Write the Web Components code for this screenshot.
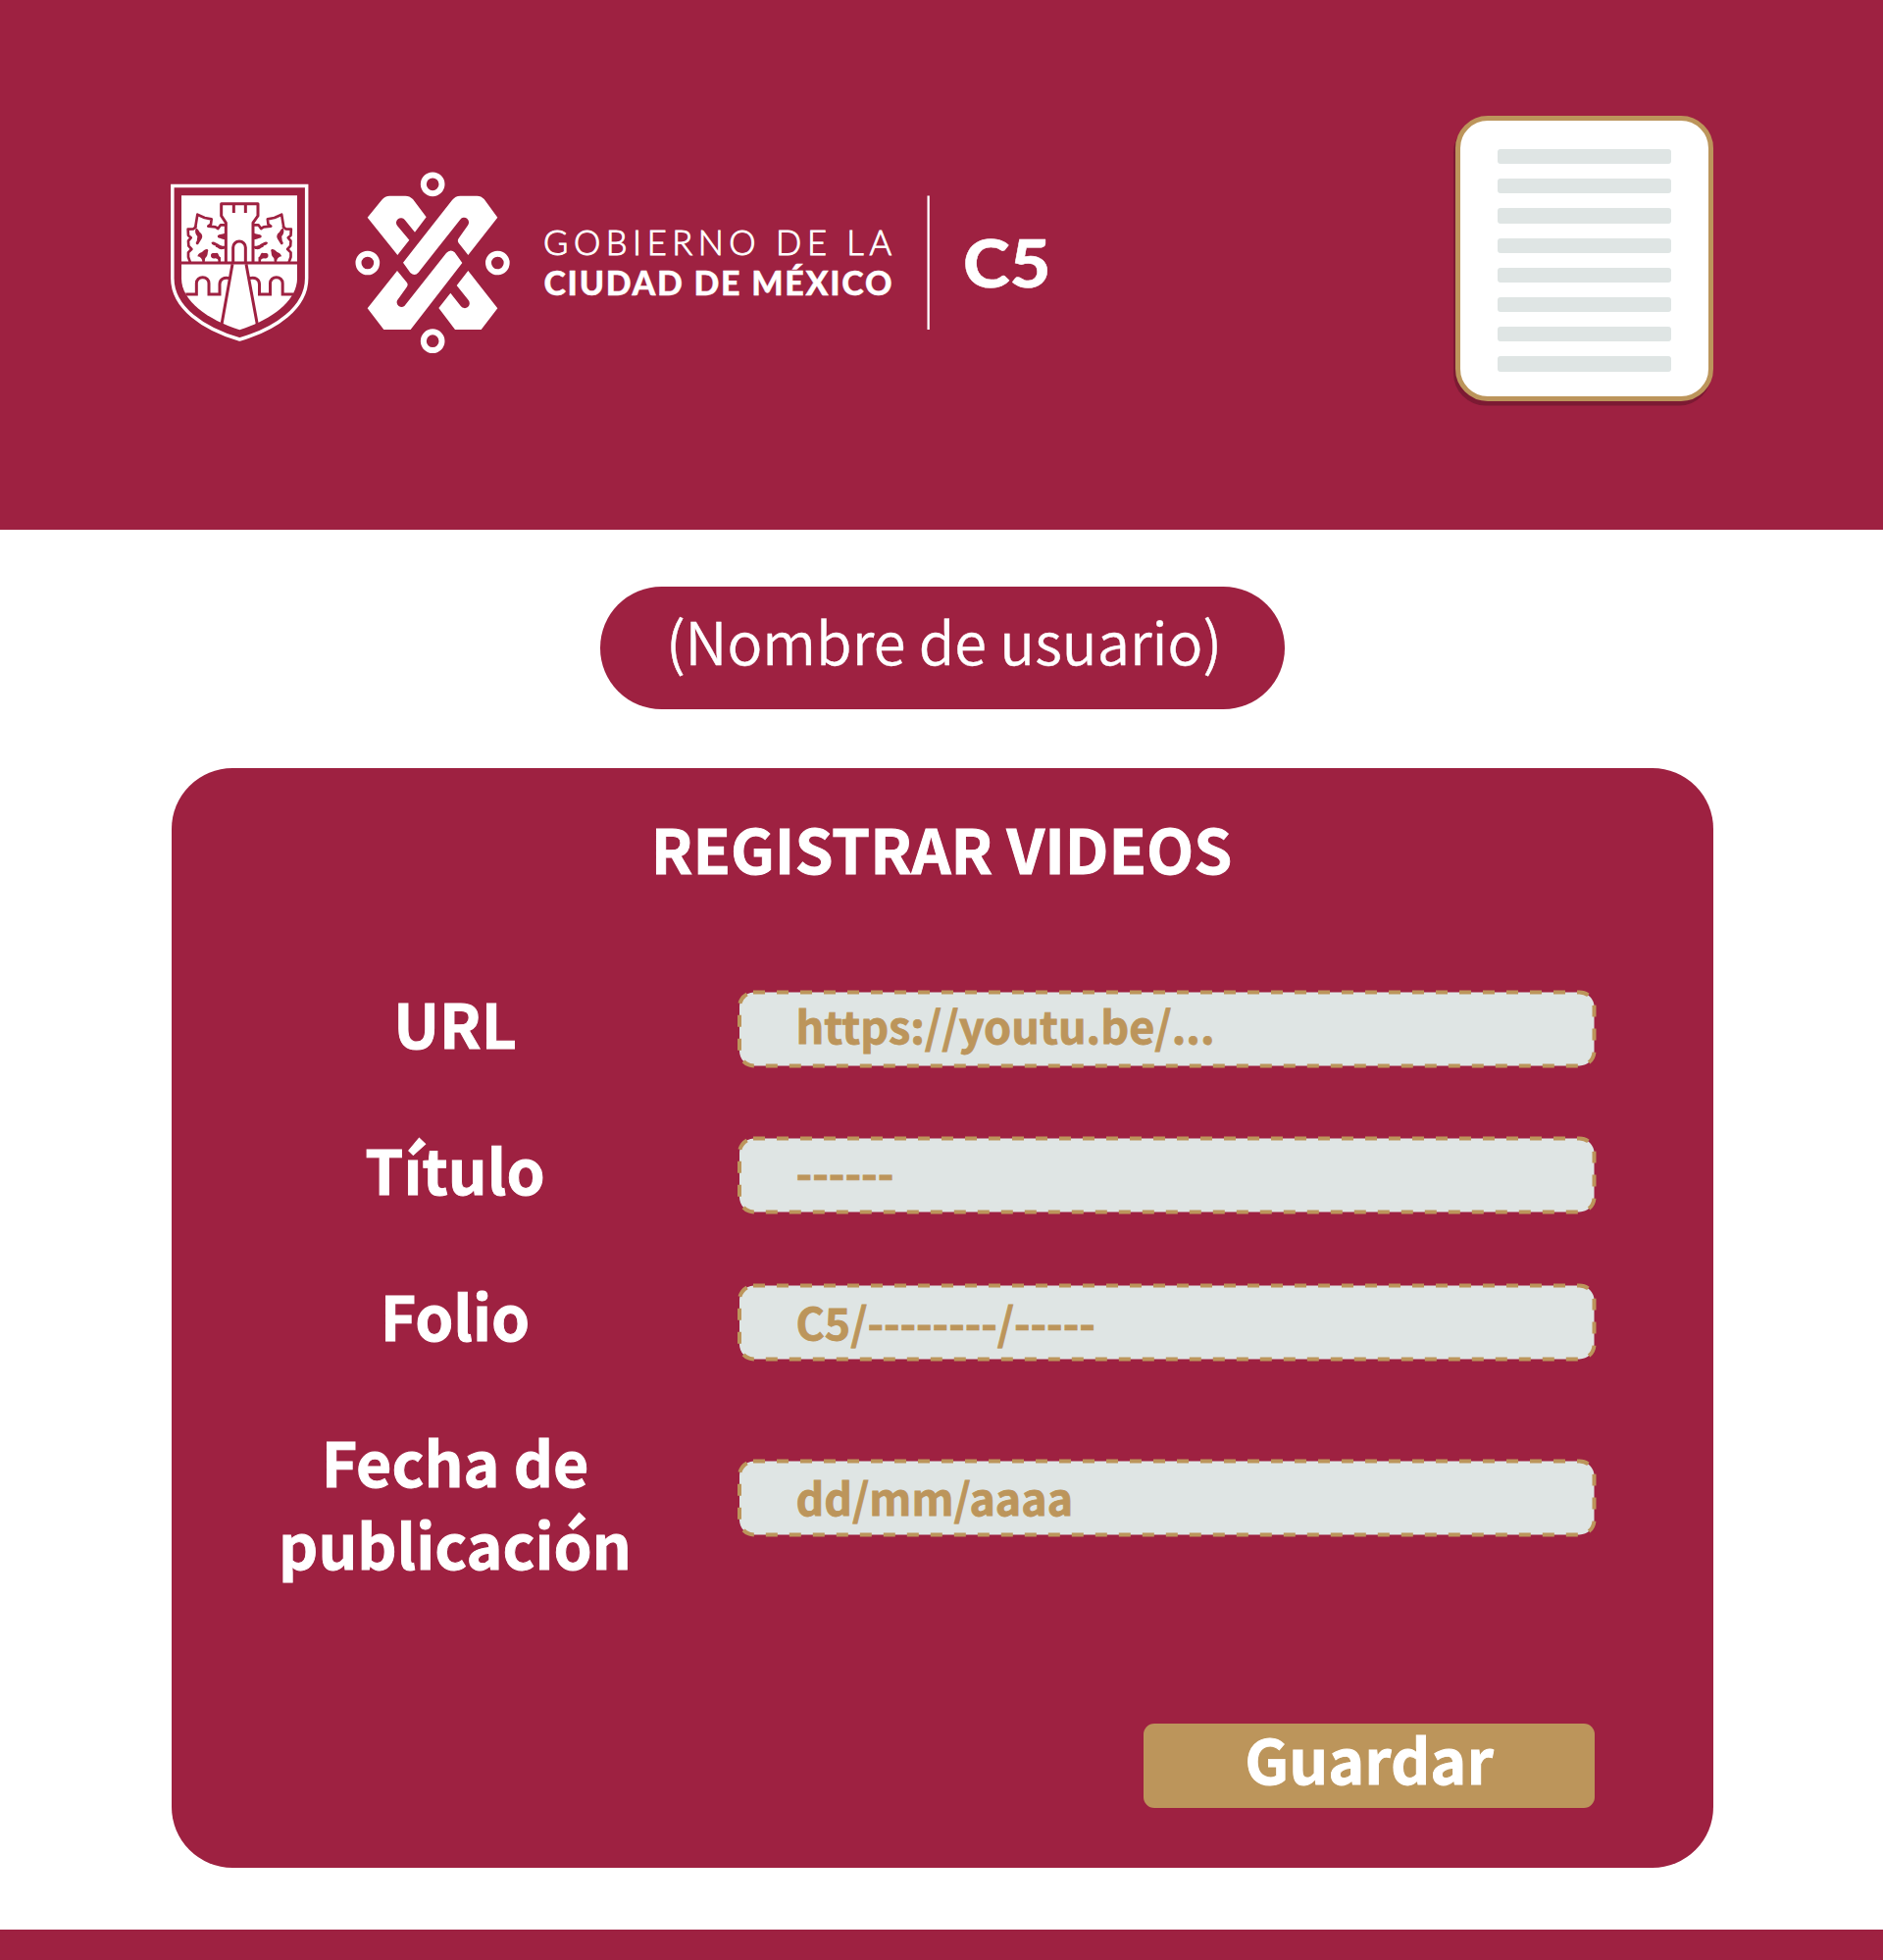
<!DOCTYPE html>
<html lang="es">
<head>
<meta charset="utf-8">
<title>Registrar videos</title>
<style>
:root{--guinda:#9e2141;--oro:#bc955b;--gris:#dfe5e4}
html,body{margin:0;background:#fff}
body{font-family:"Noto Sans CJK SC","Noto Sans",sans-serif;color:#fff;width:1920px;height:1998px;overflow:hidden}
</style>
</head>
<body>
<app-page></app-page>
<script>
const define = (name, html) => customElements.define(name, class extends HTMLElement {
  constructor() {
    super();
    this.attachShadow({ mode: 'open' }).innerHTML = html;
  }
});

define('city-shield', `
<style>:host{display:block;width:160px;height:180px}svg{display:block}</style>
<svg width="160" height="180" viewBox="0 -1 480 540" fill="none" stroke="#9e2141" stroke-width="9">
  <path stroke="#fff" stroke-width="10.500" d="M32.500 42.500H443V325C443 415 348 480 238 512C128 480 32.500 415 32.500 325Z"/>
  <path fill="#fff" stroke="none" d="M60 72H414V325C414 394 336 451 238 483C140 451 60 394 60 325Z"/>
  <path d="M60 278H414"/>
  <path stroke-linejoin="round" d="M196 278V155L182 134V97H294V134L279 155V278"/>
  <path d="M220 97V125M256 97V125M218 278V231A19 19 0 0 1 256 231V278M216 282L183 466M258 282L292 466"/>
  <g id="half">
    <path d="M73 374H106V340A19 18 0 0 1 144 340V374H177V343C177 328 190 320 208 325"/>
    <path stroke-linecap="round" stroke-linejoin="round" stroke-width="8" d="M103 167L109 130L131 140L152 144L150 160L142 166L164 168L172 173L180 162L195 162M104 168L97 174L80 175L81 194L89 201L81 211L82 226L91 236L81 246L81 260L86 274M191 194L176 197M188 232L168 226"/>
    <g fill="#9e2141" stroke="none">
      <path d="M104 173C107 170 112 178 116 184C123 189 126 196 122 204L111 222C104 222 102 217 107 211L109 197C103 191 100 181 104 173Z"/>
      <path d="M109 258C112 247 120 248 126 242C133 235 140 233 142 240C139 248 142 252 136 260C130 264 133 270 131 275H124C124 266 118 259 109 258Z"/>
      <path d="M150 253C154 244 162 250 168 247C175 249 173 258 180 261V276H172C173 269 172 265 163 264C155 266 149 262 150 253Z"/>
      <path d="M170 196C176 188 188 192 196 186V207C186 207 180 203 172 201Z"/>
      <path d="M152 215C158 210 167 218 174 221C181 229 190 224 196 228V233C187 233 187 239 176 235C169 233 172 225 161 225C153 222 151 218 152 215Z"/>
    </g>
  </g>
  <use href="#half" transform="translate(475.500 0) scale(-1 1)"/>
</svg>`);

define('city-emblem', `
<style>:host{display:block;width:180px;height:205px}svg{display:block}</style>
<svg width="180" height="205" viewBox="0 -1 540 615">
  <g fill="none" stroke="#fff" stroke-width="18">
    <circle cx="273.500" cy="67.500" r="28"/><circle cx="74.500" cy="308" r="28"/>
    <circle cx="472" cy="308" r="28"/><circle cx="273.500" cy="547" r="28"/>
  </g>
  <g fill="#fff">
    <path d="M74 169L118 115Q128 103 142 103H190Q203 103 213 113L254 168L219 214L188 176A14.500 14.500 0 0 0 165 194L202 238L166 284Z"/>
    <path d="M183 307L333 116Q343 103 358 103H409Q422 103 431 113L472 169L382 284L353 247Q348 240 353 233L381 193A14.500 14.500 0 0 0 358 175L230 337Q219 350 205 338Z"/>
    <path d="M165 332L194 367Q200 374 194 382L165 423A14.500 14.500 0 0 0 187 440L315 278Q328 264 341 276L364 308L206 512H124L74 447Z"/>
    <path d="M382 332L472 447L422 512H342L292 446L328 400L360 441A14.500 14.500 0 0 0 383 422L347 377Z"/>
  </g>
</svg>`);

define('brand-text', `
<style>:host{display:block;width:550px;height:160px}svg{display:block}text{fill:#fff;stroke:#fff;font-family:Lato,sans-serif}</style>
<svg width="550" height="160">
  <text x="14" y="69.700" font-size="34.500" font-weight="300" stroke-width=".9" textLength="355" lengthAdjust="spacing">GOBIERNO DE LA</text>
  <text x="14.500" y="110.500" font-size="34" font-weight="900" stroke-width=".4" textLength="355">CIUDAD DE MÉXICO</text>
  <rect x="405.500" y="9.500" width="2.300" height="136.500" fill="#fff"/>
  <text x="442" y="102.500" font-size="66" font-weight="900" stroke-width=".5" textLength="89.500" lengthAdjust="spacingAndGlyphs">C5</text>
</svg>`);

define('document-icon', `
<style>
:host{display:flex;flex-direction:column;gap:14.900px;box-sizing:border-box;width:263px;height:291px;padding:29px 0 0 38px;border:5px solid var(--oro);border-radius:33px;background:#fff;box-shadow:-2px 4.500px 0 #7c1a33}
i{display:block;width:177px;height:15.300px;border-radius:3px;background:var(--gris)}
</style><i></i><i></i><i></i><i></i><i></i><i></i><i></i><i></i>`);

define('site-header', `
<style>
:host{display:flex;align-items:flex-start;box-sizing:border-box;height:540px;background:var(--guinda)}
city-shield{margin:175px 25px 0 165px}
city-emblem{margin:165px 10px 0 0}
brand-text{margin-top:190px}
document-icon{margin:118px 0 0 393.700px}
</style>
<city-shield></city-shield><city-emblem></city-emblem><brand-text></brand-text><document-icon></document-icon>`);

define('user-pill', `
<style>
:host{display:block;box-sizing:border-box;width:698px;height:125px;padding-left:3px;border-radius:63px;background:var(--guinda);text-align:center;font-size:59.600px;font-weight:350;line-height:109px;white-space:nowrap;margin:58px 0 0 612px;-webkit-text-stroke:.4px #fff}
</style><slot></slot>`);

define('form-row', `
<style>
:host{display:flex;align-items:flex-start;height:84px}
.label{width:400px;text-align:center;font-size:62.600px;font-weight:700;line-height:84px;margin-left:-1px;-webkit-text-stroke:.9px #fff}
.field{display:grid;width:876px;height:79px;margin:var(--drop,10px) 0 0 88px}
.field>*{grid-area:1/1}
svg{display:block;overflow:visible}
.value{padding-left:59.500px;color:var(--oro);font-size:var(--fs,45px);font-weight:700;line-height:var(--lh,69px);white-space:nowrap;-webkit-text-stroke:.8px var(--oro)}
</style>
<div class="label"><slot name="label"></slot></div>
<div class="field">
  <svg width="876" height="79"><path d="M16 1.500H858.500A15 15 0 0 1 873.500 16.500V61.500A15 15 0 0 1 858.500 76.500H17A15 15 0 0 1 2 61.500V16.500A15 15 0 0 1 17 1.500" fill="#dfe5e4" stroke="#bc955b" stroke-width="4" stroke-dasharray="12 12"/></svg>
  <div class="value"><slot></slot></div>
</div>`);

define('save-button', `
<style>:host{display:block;width:460px;height:86px;border-radius:11px;background:var(--oro);text-align:center;font-size:62.800px;font-weight:700;line-height:69px;-webkit-text-stroke:.9px #fff}</style><slot></slot>`);

define('register-card', `
<style>
:host{display:flex;flex-direction:column;box-sizing:border-box;width:1572px;height:1121px;margin:60px 0 0 175px;padding:41px 0 0 90px;border-radius:62px;background:var(--guinda)}
h1{margin:0 0 96px -92px;text-align:center;font-size:62.600px;line-height:80px;font-weight:700;-webkit-text-stroke:.9px #fff}
.rows{display:flex;flex-direction:column;gap:65px;height:615px}
save-button{margin:142px 0 0 901px}
</style>
<h1>REGISTRAR VIDEOS</h1>
<div class="rows">
  <form-row><span slot="label">URL</span>https://youtu.be/...</form-row>
  <form-row><span slot="label">Título</span>------</form-row>
  <form-row style="--drop:11px;--lh:75px;--fs:44.700px"><span slot="label">Folio</span>C5/--------/-----</form-row>
  <form-row style="--drop:40.500px;--lh:75px;--fs:44.700px"><span slot="label">Fecha de<br>publicación</span>dd/mm/aaaa</form-row>
</div>
<save-button>Guardar</save-button>`);

define('app-page', `
<style>:host{display:flex;flex-direction:column;height:1998px}footer{margin-top:63px;height:31px;background:var(--guinda)}</style>
<site-header></site-header>
<user-pill>(Nombre de usuario)</user-pill>
<register-card></register-card>
<footer></footer>`);
</script>
</body>
</html>
